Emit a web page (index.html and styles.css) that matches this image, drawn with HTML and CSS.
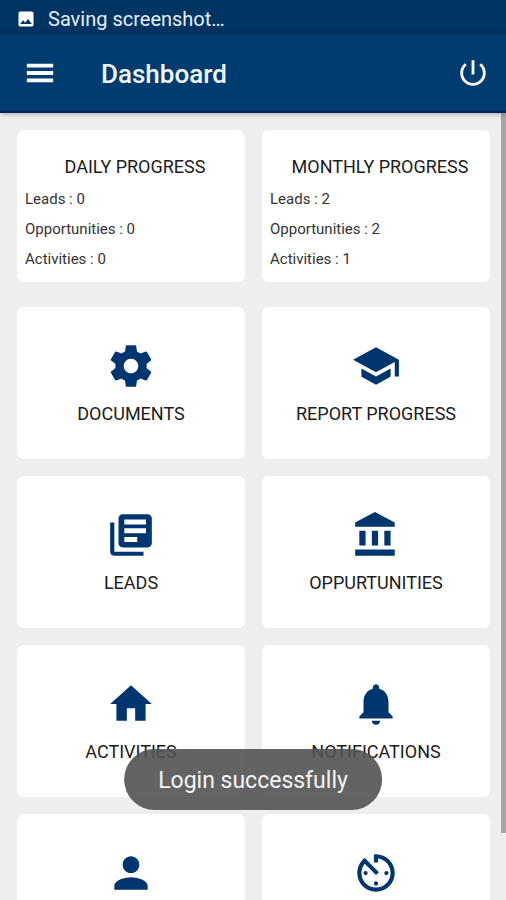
FILE: index.html
```html
<!DOCTYPE html>
<html lang="en">
<head>
<meta charset="utf-8">
<meta name="viewport" content="width=device-width, initial-scale=1">
<title>Dashboard</title>
<link rel="stylesheet" href="styles.css">
</head>
<body>
<div class="app">
  <div class="status">
    <svg class="status-icon" viewBox="0 0 24 24" aria-hidden="true"><path d="M21 19V5c0-1.100-.9-2-2-2H5c-1.100 0-2 .9-2 2v14c0 1.100.9 2 2 2h14c1.100 0 2-.9 2-2zM8.500 13.500l2.500 3.010L14.500 12l4.500 6H5l3.500-4.500z"/></svg>
    <span>Saving screenshot…</span>
  </div>
  <header class="bar">
    <button class="bar-button" type="button" aria-label="Menu">
      <svg class="bar-icon" viewBox="0 0 24 24"><path d="M2.700 18.500h18.600v-2.700H2.700zM2.700 13.350h18.600v-2.700H2.700zM2.700 5.500v2.700h18.600V5.500z"/></svg>
    </button>
    <h1 class="title">Dashboard</h1>
    <button class="bar-button" type="button" aria-label="Log out">
      <svg class="bar-icon" viewBox="0 0 24 24"><path d="M13 3h-2v10h2V3zm4.830 2.170l-1.420 1.420C17.990 7.860 19 9.810 19 12c0 3.870-3.130 7-7 7s-7-3.130-7-7c0-2.190 1.010-4.140 2.580-5.420L6.170 5.170C4.230 6.820 3 9.260 3 12c0 4.970 4.030 9 9 9s9-4.030 9-9c0-2.740-1.230-5.180-3.170-6.830z"/></svg>
    </button>
  </header>
  <main class="content">
    <section class="grid">
      <article class="card progress">
        <h2 class="heading">DAILY PROGRESS</h2>
        <p class="stat">Leads : 0</p>
        <p class="stat">Opportunities : 0</p>
        <p class="stat">Activities : 0</p>
      </article>
      <article class="card progress">
        <h2 class="heading">MONTHLY PROGRESS</h2>
        <p class="stat">Leads : 2</p>
        <p class="stat">Opportunities : 2</p>
        <p class="stat">Activities : 1</p>
      </article>
    </section>
    <nav class="grid">
      <a class="card tile" href="#documents">
        <svg class="tile-icon" viewBox="0 0 24 24"><path d="M19.430 12.980c.04-.32.07-.64.07-.98s-.03-.66-.07-.98l2.110-1.650c.19-.15.24-.42.12-.64l-2-3.460c-.12-.22-.39-.3-.61-.22l-2.490 1c-.52-.4-1.080-.73-1.690-.98l-.38-2.650C14.460 2.180 14.250 2 14 2h-4c-.25 0-.46.18-.49.42l-.38 2.650c-.61.25-1.170.59-1.690.98l-2.490-1c-.23-.09-.49 0-.61.22l-2 3.460c-.13.22-.07.49.12.64l2.110 1.650c-.04.32-.07.65-.07.98s.03.66.07.98l-2.110 1.650c-.19.15-.24.42-.12.64l2 3.460c.12.22.39.3.61.22l2.490-1c.52.4 1.080.73 1.690.98l.38 2.650c.03.24.24.42.49.42h4c.25 0 .46-.18.49-.42l.38-2.650c.61-.25 1.170-.59 1.690-.98l2.490 1c.23.09.49 0 .61-.22l2-3.460c.12-.22.07-.49-.12-.64l-2.110-1.650zM12 15.500c-1.930 0-3.500-1.570-3.500-3.500s1.570-3.500 3.500-3.500 3.500 1.570 3.500 3.500-1.570 3.500-3.500 3.500z"/></svg>
        <span>DOCUMENTS</span>
      </a>
      <a class="card tile" href="#report">
        <svg class="tile-icon" viewBox="0 0 24 24"><path d="M5 13.180v4L12 21l7-3.820v-4L12 17l-7-3.820zM12 3L1 9l11 6 9-4.910V17h2V9L12 3z"/></svg>
        <span>REPORT PROGRESS</span>
      </a>
      <a class="card tile" href="#leads">
        <svg class="tile-icon" viewBox="0 0 24 24"><path d="M4 6H2v14c0 1.100.9 2 2 2h14v-2H4V6zm16-4H8c-1.100 0-2 .9-2 2v12c0 1.100.9 2 2 2h12c1.100 0 2-.9 2-2V4c0-1.100-.9-2-2-2zm-.8 9.200H8.800V8.800h10.400v2.400zm-4.200 4.200H8.800V13H15v2.400zm4.200-8.400H8.800V4.600h10.400V7z"/></svg>
        <span>LEADS</span>
      </a>
      <a class="card tile" href="#opportunities">
        <svg class="tile-icon" viewBox="0 0 24 24"><path d="M4 10v7h3v-7H4zm6 0v7h3v-7h-3zM2 22h19v-3H2v3zm14-12v7h3v-7h-3zm-4.500-9L2 6v2h19V6l-9.500-5z"/></svg>
        <span>OPPURTUNITIES</span>
      </a>
      <a class="card tile" href="#activities">
        <svg class="tile-icon" viewBox="0 0 24 24"><path d="M10 20v-6h4v6h5v-8h3L12 3 2 12h3v8z"/></svg>
        <span>ACTIVITIES</span>
      </a>
      <a class="card tile" href="#notifications">
        <svg class="tile-icon" viewBox="0 0 24 24"><path d="M12 22c1.100 0 2-.9 2-2h-4c0 1.100.89 2 2 2zm6-6v-5c0-3.070-1.640-5.640-4.500-6.320V4c0-.83-.67-1.500-1.500-1.500s-1.500.67-1.500 1.500v.68C7.630 5.360 6 7.920 6 11v5l-2 2v1h16v-1l-2-2z"/></svg>
        <span>NOTIFICATIONS</span>
      </a>
      <a class="card tile" href="#profile" aria-label="Profile">
        <svg class="tile-icon" viewBox="0 0 24 24"><path d="M12 12c2.210 0 4-1.790 4-4s-1.790-4-4-4-4 1.790-4 4 1.790 4 4 4zm0 2c-2.670 0-8 1.340-8 4v2h16v-2c0-2.660-5.330-4-8-4z"/></svg>
      </a>
      <a class="card tile" href="#timer" aria-label="Timer">
        <svg class="tile-icon" viewBox="0 0 24 24"><path d="M11 17c0 .55.45 1 1 1s1-.45 1-1-.45-1-1-1-1 .45-1 1zm0-14v4h2V5.080c3.390.49 6 3.390 6 6.920 0 3.870-3.130 7-7 7s-7-3.130-7-7c0-1.680.59-3.220 1.580-4.420L12 13l1.410-1.410-6.800-6.800v.02C4.420 6.450 3 9.050 3 12c0 4.970 4.020 9 9 9 4.970 0 9-4.030 9-9s-4.030-9-9-9h-1zm7 9c0-.55-.45-1-1-1s-1 .45-1 1 .45 1 1 1 1-.45 1-1zM6 12c0 .55.45 1 1 1s1-.45 1-1-.45-1-1-1-1 .45-1 1z"/></svg>
      </a>
    </nav>
    <div class="scrollbar"></div>
  </main>
  <div class="toast" role="status">Login successfully</div>
</div>
</body>
</html>
```
FILE: styles.css
```css
* {
  box-sizing: border-box;
}

body {
  margin: 0;
  background: #eee;
  color: #1c1c1c;
  font-family: Roboto, "Liberation Sans", sans-serif;
}

.app {
  position: relative;
  display: flex;
  flex-direction: column;
  height: 100vh;
  overflow: hidden;
}

.status {
  display: flex;
  flex: none;
  align-items: center;
  gap: 12px;
  height: 34px;
  padding: 3px 16px 0;
  background: #003463;
  color: #e9eef8;
  font-size: 20px;
}

.status-icon {
  width: 20px;
  height: 20px;
  fill: #fff;
}

.bar {
  position: relative;
  z-index: 1;
  display: flex;
  flex: none;
  align-items: center;
  height: 79px;
  padding: 1px 16px 0 23px;
  border-bottom: 2px solid #00205f;
  background: #013c71;
  box-shadow: 0 1px 5px rgba(40, 20, 40, 0.35);
}

.bar-button {
  display: flex;
  padding: 0;
  border: 0;
  background: none;
}

.bar-icon {
  width: 34px;
  height: 34px;
  fill: #fff;
}

.title {
  flex: 1;
  margin: 0 0 0 44px;
  padding-top: 2px;
  color: #f4f6ff;
  font-size: 26px;
  font-weight: 500;
  line-height: 32px;
}

.content {
  position: relative;
  flex: 1;
  min-height: 0;
  padding: 17px 16px 0 17px;
  overflow: hidden;
}

.grid {
  display: grid;
  grid-template-columns: 1fr 1fr;
  gap: 17px;
  margin-bottom: 25px;
}

.card {
  min-height: 152px;
  border-radius: 7px;
  background: #fff;
}

.progress {
  padding: 26px 0 0 8px;
}

.heading {
  margin: 0 0 6px;
  font-size: 18px;
  font-weight: 400;
  line-height: 22px;
  text-align: center;
}

.stat {
  margin: 0;
  color: #333;
  font-size: 15px;
  line-height: 30px;
}

.tile {
  display: flex;
  flex-direction: column;
  align-items: center;
  gap: 12px;
  padding-top: 34px;
  color: inherit;
  font-size: 18px;
  line-height: 22px;
  text-decoration: none;
}

.tile-icon {
  width: 50px;
  height: 50px;
  fill: #00366f;
}

.scrollbar {
  position: absolute;
  top: 0;
  right: 0;
  width: 5px;
  height: 91.5%;
  background: #a6a6a6;
}

.toast {
  position: absolute;
  bottom: 90px;
  left: 50%;
  z-index: 2;
  padding: 18px 34px 15px;
  border-radius: 31px;
  background: rgba(82, 82, 82, 0.9);
  color: #f4f4f4;
  font-size: 23px;
  line-height: 28px;
  white-space: nowrap;
  transform: translateX(-50%);
}
```
